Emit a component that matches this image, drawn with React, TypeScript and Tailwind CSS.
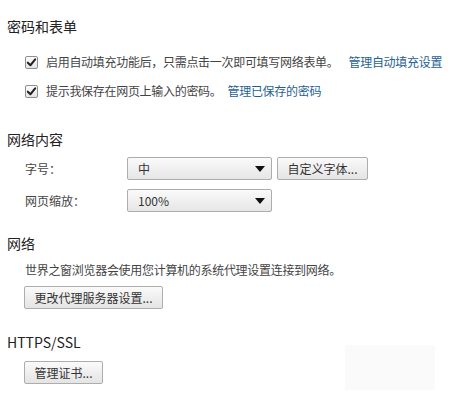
import React from "react";

const font = { fontFamily: '"Noto Sans CJK SC", "Noto Sans", sans-serif' };

function Check() {
  return (
    <span className="flex h-[13px] w-[13px] shrink-0 items-center justify-center rounded-[2px] border border-[#8e8e8e] bg-gradient-to-b from-[#fdfdfd] to-[#e4e4e4]">
      <svg viewBox="0 0 12 12" className="h-[11px] w-[11px]">
        <path d="M2 6.2 L4.8 9 L10 2.6" fill="none" stroke="#222" strokeWidth="2.2" strokeLinecap="round" strokeLinejoin="round" />
      </svg>
    </span>
  );
}

function Select({ value }: { value: string }) {
  return (
    <div className="flex h-[23px] w-[145px] items-center justify-between rounded-[2px] border border-[#adadad] bg-gradient-to-b from-[#fafafa] to-[#e6e6e6] pl-[10px] pr-[6px] text-[12px] text-[#333]">
      <span>{value}</span>
      <svg viewBox="0 0 10 6" className="h-[6px] w-[10px]">
        <path d="M0 0 H10 L5 6 Z" fill="#111" />
      </svg>
    </div>
  );
}

function Button({ children, className = "" }: { children: React.ReactNode; className?: string }) {
  return (
    <button className={"flex h-[23px] items-center justify-center whitespace-nowrap rounded-[2px] border border-[#adadad] bg-gradient-to-b from-[#fafafa] to-[#e4e4e4] text-[12px] text-[#333] " + className}>
      {children}
    </button>
  );
}

function Heading({ children, className = "" }: { children: React.ReactNode; className?: string }) {
  return <h2 className={"h-[20px] text-[14px] leading-[20px] text-[#222] " + className}>{children}</h2>;
}

export default function App() {
  return (
    <div className="relative h-[418px] w-[457px] overflow-hidden bg-white pl-[7px] pt-[16px]" style={font}>
      <Heading>密码和表单</Heading>
      <div className="mt-[16px] flex h-[20px] items-center whitespace-nowrap pl-[18px] text-[12px] tracking-[-0.3px] text-[#444]">
        <Check />
        <span className="ml-[8px]">启用自动填充功能后，只需点击一次即可填写网络表单。</span>
        <a className="ml-[10px] text-[#1f5f93]">管理自动填充设置</a>
      </div>
      <div className="mt-[9px] flex h-[20px] items-center whitespace-nowrap pl-[18px] text-[12px] tracking-[-0.3px] text-[#444]">
        <Check />
        <span className="ml-[8px]">提示我保存在网页上输入的密码。</span>
        <a className="ml-[6px] text-[#1f5f93]">管理已保存的密码</a>
      </div>

      <Heading className="mt-[28px]">网络内容</Heading>
      <div className="mt-[8px] flex h-[23px] items-center pl-[18px] text-[12px] text-[#444]">
        <span className="w-[102px]">字号：</span>
        <Select value="中" />
        <Button className="ml-[5px] w-[91px]">自定义字体...</Button>
      </div>
      <div className="mt-[9px] flex h-[23px] items-center pl-[18px] text-[12px] text-[#444]">
        <span className="w-[102px]">网页缩放：</span>
        <Select value="100%" />
      </div>

      <Heading className="mt-[21px]">网络</Heading>
      <p className="mt-[7px] h-[20px] whitespace-nowrap pl-[18px] text-[12px] leading-[20px] tracking-[-0.3px] text-[#444]">
        世界之窗浏览器会使用您计算机的系统代理设置连接到网络。
      </p>
      <div className="mt-[6px] pl-[17px]">
        <Button className="w-[139px]">更改代理服务器设置...</Button>
      </div>

      <Heading className="mt-[23px]">HTTPS/SSL</Heading>
      <div className="mt-[9px] pl-[17px]">
        <Button className="w-[79px]">管理证书...</Button>
      </div>

      <div className="absolute left-[345px] top-[345px] h-[45px] w-[90px] bg-[#fafafa]" />
    </div>
  );
}
